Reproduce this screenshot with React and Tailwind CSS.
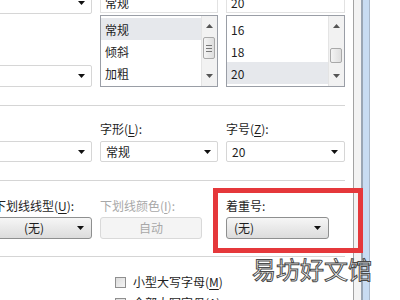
const font = { fontFamily: '"Noto Sans CJK SC", "Microsoft YaHei", sans-serif' };

function Arrow() {
  return (
    <svg width="7" height="4" viewBox="0 0 7 4" className="shrink-0">
      <path d="M0 0h7L3.5 4z" fill="#111" />
    </svg>
  );
}

function Caret({ up }) {
  return (
    <svg width="7" height="4" viewBox="0 0 7 4">
      <path d={up ? 'M0 4h7L3.5 0z' : 'M0 0h7L3.5 4z'} fill="#555" />
    </svg>
  );
}

function Acc({ children }) {
  return <span className="underline underline-offset-2">{children}</span>;
}

function Combo({ children, className = '' }) {
  return (
    <div className={`flex h-[21px] items-center justify-between rounded-[2px] border border-[#d6d6d6] bg-white pl-[5px] pr-[6px] ${className}`}>
      <span>{children}</span>
      <Arrow />
    </div>
  );
}

function ButtonCombo({ children, disabled }) {
  if (disabled) {
    return (
      <div className="flex h-[22px] items-center justify-center rounded-[3px] border border-[#d9d9d9] bg-[#f4f4f4] text-[#a8a8a8]">
        {children}
      </div>
    );
  }
  return (
    <div className="flex h-[22px] items-center justify-between rounded-[3px] border border-[#8e8f8f] bg-gradient-to-b from-[#f6f6f6] to-[#dcdcdc] pl-[7px] pr-[7px]">
      <span>{children}</span>
      <Arrow />
    </div>
  );
}

function ListBox({ items, selected, thumbTop, thumbH, grip }) {
  return (
    <div className="flex h-[72px] border border-[#9a9ea6] bg-white">
      <div className="flex-1 pt-[2px]">
        {items.map((it) => (
          <div
            key={it}
            className={`flex h-[22px] items-center pl-[4px] pt-[1px] ${it === selected ? 'bg-[#e6e8ec]' : ''}`}
          >
            {it}
          </div>
        ))}
      </div>
      <div className="relative flex w-[16px] flex-col items-center justify-between border-l border-[#e4e4e4] bg-[#f2f2f2] py-[8px]">
        <Caret up />
        <Caret />
        <div
          className="absolute left-[1px] right-[2px] flex flex-col items-center justify-center gap-[2px] rounded-[2px] border border-[#a9a9a9] bg-gradient-to-r from-[#f4f4f4] to-[#dedede]"
          style={{ top: thumbTop, height: thumbH }}
        >
          {grip && (
            <>
              <div className="h-px w-[6px] bg-[#777]" />
              <div className="h-px w-[6px] bg-[#777]" />
              <div className="h-px w-[6px] bg-[#777]" />
            </>
          )}
        </div>
      </div>
    </div>
  );
}

function Separator() {
  return <div className="-ml-[6px] h-[2px] border-t border-[#d5d5d5] bg-white" />;
}

function Checkbox({ label }) {
  return (
    <div className="ml-[115px] flex h-[12px] items-center gap-[7px]">
      <div className="h-[11px] w-[11px] border border-[#8f8f8f] bg-gradient-to-br from-[#dcdcdc] to-[#f4f4f4] p-[1px]" />
      <span>{label}</span>
    </div>
  );
}

export default function App() {
  return (
    <div className="relative flex h-[300px] w-[400px] overflow-hidden bg-white text-[12px] leading-[14px] text-[#1e1e1e]" style={font}>
      <div className="w-[353px] shrink-0 pr-[8px]">
        <div className="-ml-[6px] -mt-[8px] grid grid-cols-[98px_118px_119px] gap-x-[8px]">
          <div className="flex flex-col">
            <Combo className="h-[22px]" />
            <Combo className="mt-[51px] h-[22px]" />
          </div>
          <div className="flex flex-col gap-[2px]">
            <div className="flex h-[21px] items-center border border-[#e2e2e2] pl-[4px]">常规</div>
            <ListBox items={['常规', '倾斜', '加粗']} selected="常规" thumbTop={21} thumbH={22} grip />
          </div>
          <div className="flex flex-col gap-[2px]">
            <div className="flex h-[21px] items-center border border-[#e2e2e2] pl-[4px]">20</div>
            <ListBox items={['16', '18', '20']} selected="20" thumbTop={32} thumbH={15} />
          </div>
        </div>

        <div className="mt-[18px]">
          <Separator />
        </div>

        <div className="-ml-[6px] mt-[15px] grid grid-cols-[98px_118px_119px] gap-x-[8px]">
          <div />
          <div>
            字形(<Acc>L</Acc>):
          </div>
          <div>
            字号(<Acc>Z</Acc>):
          </div>
          <Combo className="mt-[5px]" />
          <Combo className="mt-[5px]">常规</Combo>
          <Combo className="mt-[5px]">20</Combo>
        </div>

        <div className="mt-[18px]">
          <Separator />
        </div>

        <div className="-ml-[6px] mt-[17px] grid grid-cols-[98px_102px_119px] gap-x-[8px]">
          <div className="whitespace-nowrap">
            下划线线型(<Acc>U</Acc>):
          </div>
          <div className="whitespace-nowrap text-[#a8a8a8]">
            下划线颜色(<Acc>I</Acc>):
          </div>
          <div className="col-start-3 ml-[16px]">着重号:</div>
          <div className="mt-[4px]">
            <ButtonCombo>
              <span className="ml-[22px]">(无)</span>
            </ButtonCombo>
          </div>
          <div className="mt-[4px]">
            <ButtonCombo disabled>自动</ButtonCombo>
          </div>
          <div className="ml-[16px] mt-[4px]">
            <ButtonCombo>(无)</ButtonCombo>
          </div>
        </div>

        <div className="mt-[17px]">
          <Separator />
        </div>

        <div className="mt-[18px] flex flex-col gap-[9px]">
          <Checkbox
            label={
              <>
                小型大写字母(<Acc>M</Acc>)
              </>
            }
          />
          <Checkbox label="全部大写字母(A)" />
        </div>
      </div>

      <div className="flex shrink-0 border-l border-[#a3a3a3]">
        <div className="w-[7px] bg-[#f3f3f3]" />
        <div className="w-[2px] bg-[#9aa6b4]" />
        <div className="w-[7px] border-r border-[#a9b8ca] bg-[#c8dcf2]" />
      </div>
      <div className="flex-1 bg-white" />

      <div className="absolute left-[213px] top-[188px] h-[65px] w-[150px] border-[5px] border-[#e5383b]" />

      <div className="absolute left-[252px] top-[254px] text-[24px] leading-[30px] tracking-[0px] text-white [-webkit-text-stroke:1px_#4a4a4a]">
        易坊好文馆
      </div>
    </div>
  );
}
